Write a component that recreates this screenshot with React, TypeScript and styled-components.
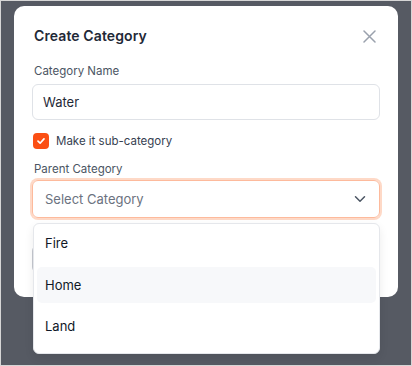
import React from "react";
import styled, { createGlobalStyle } from "styled-components";

const Global = createGlobalStyle`
  html, body { margin: 0; padding: 0; }
  body { font-family: Inter, "Noto Sans", Arial, sans-serif; -webkit-font-smoothing: antialiased; }
  * { box-sizing: border-box; }
`;

const Page = styled.div`
  width: 412px;
  height: 366px;
  border: 1px solid #d6d6d6;
  background: #565a63;
  padding: 5px 13px;
  overflow: hidden;
`;

const Modal = styled.div`
  width: 384px;
  height: 291px;
  background: #ffffff;
  border-radius: 10px;
  padding: 18px 18px 0 18px;
  display: flex;
  flex-direction: column;
`;

const Header = styled.div`
  display: flex;
  align-items: center;
  justify-content: space-between;
  height: 24px;
  padding-left: 2px;
`;

const Title = styled.h2`
  margin: 0;
  font-size: 14px;
  font-weight: 600;
  color: #1f2937;
  letter-spacing: 0.1px;
  line-height: 22px;
`;

const CloseButton = styled.button`
  border: none;
  background: none;
  padding: 0;
  width: 16px;
  height: 16px;
  margin-right: 3px;
  display: flex;
  align-items: center;
  justify-content: center;
  cursor: pointer;
`;

const Label = styled.div<{ $top: number }>`
  margin-top: ${(p) => p.$top}px;
  height: 18px;
  line-height: 18px;
  font-size: 11.5px;
  color: #4b5563;
  padding-left: 2px;
`;

const TextInput = styled.div`
  margin-top: 4px;
  height: 36px;
  border: 1px solid #dfe2e7;
  border-radius: 6px;
  display: flex;
  align-items: center;
  padding: 0 10px;
  font-size: 13px;
  color: #1f2937;
`;

const CheckRow = styled.div`
  margin-top: 13px;
  display: flex;
  align-items: center;
  gap: 7px;
  height: 16px;
  padding-left: 1px;
  font-size: 11.5px;
  color: #374151;
`;

const Box = styled.span`
  width: 16px;
  height: 16px;
  border-radius: 4px;
  background: #fb4f14;
  display: flex;
  align-items: center;
  justify-content: center;
`;

const SelectWrap = styled.div`
  position: relative;
  margin-top: 2px;
`;

const Select = styled.div`
  height: 38px;
  border: 1px solid #fdba9c;
  box-shadow: 0 0 0 2px #fed9c7;
  border-radius: 6px;
  display: flex;
  align-items: center;
  justify-content: space-between;
  padding: 0 13px 0 12px;
  font-size: 13px;
  color: #6b7280;
`;

const Menu = styled.div`
  position: absolute;
  left: 1px;
  right: 0;
  top: 43px;
  background: #ffffff;
  border: 1px solid #e5e7eb;
  border-radius: 6px;
  box-shadow: 0 4px 10px rgba(0, 0, 0, 0.08);
  padding: 1px 3px 9px;
  display: flex;
  flex-direction: column;
  gap: 5.5px;
  z-index: 2;
`;

const Item = styled.div<{ $active?: boolean }>`
  height: 36px;
  border-radius: 5px;
  background: ${(p) => (p.$active ? "#f7f8fa" : "transparent")};
  display: flex;
  align-items: center;
  padding: 0 8px;
  font-size: 13px;
  color: #111827;
`;

const Footer = styled.div`
  margin-top: 27px;
  display: flex;
  gap: 10px;
`;

const Button = styled.button<{ $primary?: boolean }>`
  height: 28px;
  padding: 0 16px;
  border-radius: 6px;
  font-family: inherit;
  font-size: 13px;
  border: 1px solid ${(p) => (p.$primary ? "#fb4f14" : "#c5c9d0")};
  background: ${(p) => (p.$primary ? "#fb4f14" : "#ffffff")};
  color: ${(p) => (p.$primary ? "#ffffff" : "#374151")};
`;

export default function App() {
  return (
    <>
      <Global />
      <Page>
        <Modal>
          <Header>
            <Title>Create Category</Title>
            <CloseButton aria-label="Close">
              <svg width="13" height="13" viewBox="0 0 13 13" fill="none">
                <path d="M1 1L12 12M12 1L1 12" stroke="#9aa1ad" strokeWidth="1.5" strokeLinecap="round" />
              </svg>
            </CloseButton>
          </Header>
          <Label $top={14}>Category Name</Label>
          <TextInput>Water</TextInput>
          <CheckRow>
            <Box>
              <svg width="10" height="10" viewBox="0 0 10 10" fill="none">
                <path d="M2 5.2L4.1 7.2L8 2.9" stroke="#fff" strokeWidth="1.7" strokeLinecap="round" strokeLinejoin="round" />
              </svg>
            </Box>
            Make it sub-category
          </CheckRow>
          <Label $top={11}>Parent Category</Label>
          <SelectWrap>
            <Select>
              Select Category
              <svg width="12" height="8" viewBox="0 0 12 8" fill="none">
                <path d="M1.5 1.8L6 6.2L10.5 1.8" stroke="#4b5563" strokeWidth="1.5" strokeLinecap="round" strokeLinejoin="round" />
              </svg>
            </Select>
            <Menu>
              <Item>Fire</Item>
              <Item $active>Home</Item>
              <Item>Land</Item>
            </Menu>
          </SelectWrap>
          <Footer>
            <Button>Cancel</Button>
            <Button $primary>Create</Button>
          </Footer>
        </Modal>
      </Page>
    </>
  );
}
